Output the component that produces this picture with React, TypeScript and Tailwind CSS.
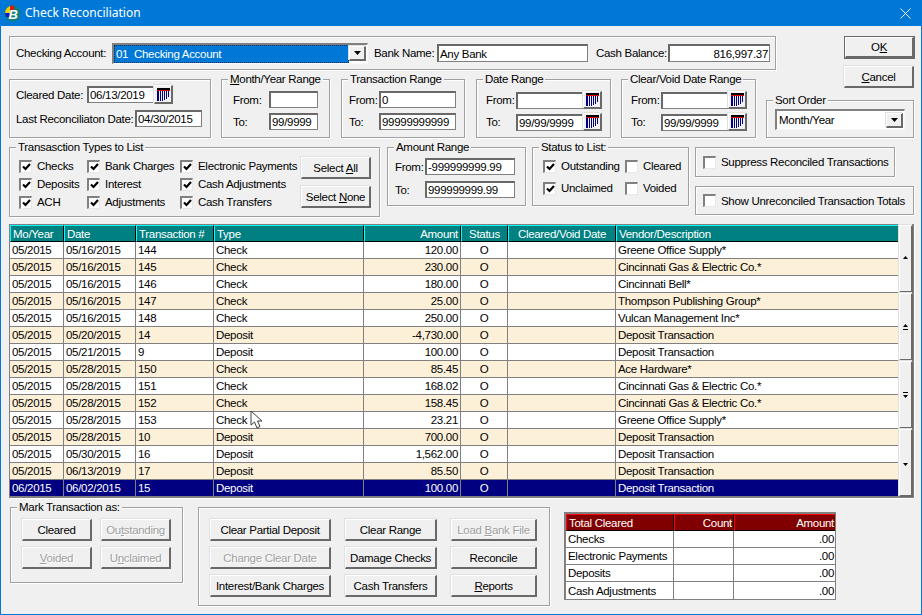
import React from 'react';

const SUNKEN = 'bg-white border-t-2 border-l-2 border-b border-r border-t-[#696969] border-l-[#696969] border-b-[#808080] border-r-[#808080]';
const RAISED = 'bg-[#f0f0f0] border-t border-l border-b-2 border-r-2 border-t-white border-l-white border-b-[#696969] border-r-[#696969] shadow-[-1px_-1px_0_#e0e0e0]';

const rows = [
  ['05/2015', '05/16/2015', '144', 'Check', '120.00', 'Greene Office Supply*'],
  ['05/2015', '05/16/2015', '145', 'Check', '230.00', 'Cincinnati Gas & Electric Co.*'],
  ['05/2015', '05/16/2015', '146', 'Check', '180.00', 'Cincinnati Bell*'],
  ['05/2015', '05/16/2015', '147', 'Check', '25.00', 'Thompson Publishing Group*'],
  ['05/2015', '05/16/2015', '148', 'Check', '250.00', 'Vulcan Management Inc*'],
  ['05/2015', '05/20/2015', '14', 'Deposit', '-4,730.00', 'Deposit Transaction'],
  ['05/2015', '05/21/2015', '9', 'Deposit', '100.00', 'Deposit Transaction'],
  ['05/2015', '05/28/2015', '150', 'Check', '85.45', 'Ace Hardware*'],
  ['05/2015', '05/28/2015', '151', 'Check', '168.02', 'Cincinnati Gas & Electric Co.*'],
  ['05/2015', '05/28/2015', '152', 'Check', '158.45', 'Cincinnati Gas & Electric Co.*'],
  ['05/2015', '05/28/2015', '153', 'Check', '23.21', 'Greene Office Supply*'],
  ['05/2015', '05/28/2015', '10', 'Deposit', '700.00', 'Deposit Transaction'],
  ['05/2015', '05/30/2015', '16', 'Deposit', '1,562.00', 'Deposit Transaction'],
  ['05/2015', '06/13/2019', '17', 'Deposit', '85.50', 'Deposit Transaction'],
  ['06/2015', '06/02/2015', '15', 'Deposit', '100.00', 'Deposit Transaction'],
];

const totals = ['Checks', 'Electronic Payments', 'Deposits', 'Cash Adjustments'];

const Group = ({ label, className, children }: { label?: React.ReactNode; className: string; children?: React.ReactNode }) => (
  <div className={`relative shrink-0 border border-[#a0a0a0] shadow-[inset_1px_1px_0_#fff,1px_1px_0_#fff] ${className}`}>
    {label && <span className="absolute -top-[8px] left-[6px] bg-[#f0f0f0] px-[2px]">{label}</span>}
    {children}
  </div>
);

const Input = ({ value, className, right }: { value?: string; className: string; right?: boolean }) => (
  <div className={`${SUNKEN} shrink-0 flex items-center px-[1px] overflow-hidden ${right ? 'justify-end' : ''} ${className}`}>{value}</div>
);

const Check = ({ checked, label, className }: { checked?: boolean; label: string; className?: string }) => (
  <div className={`flex items-center gap-[5px] ${className ?? ''}`}>
    <div className="w-[13px] h-[13px] shrink-0 bg-white border-t-2 border-l-2 border-b border-r border-t-[#808080] border-l-[#808080] border-b-[#e8e8e8] border-r-[#e8e8e8] flex items-center justify-center">
      {checked && (
        <svg width="9" height="8" viewBox="0 0 9 8">
          <path d="M1 3.5 L3.5 6 L8 1" fill="none" stroke="#000" strokeWidth="2.2" />
        </svg>
      )}
    </div>
    <span>{label}</span>
  </div>
);

const Btn = ({ children, disabled, className }: { children: React.ReactNode; disabled?: boolean; className: string }) => (
  <div className={`${RAISED} shrink-0 flex items-center justify-center ${disabled ? 'text-[#a0a0a0] [text-shadow:1px_1px_0_#fff]' : ''} ${className}`}>
    {children}
  </div>
);

const CalIcon = () => (
  <svg width="13" height="13" viewBox="0 0 13 13">
    <rect x="0" y="0" width="13" height="2" fill="#000" />
    <rect x="0" y="2" width="13" height="1" fill="#e00000" />
    {[10, 10, 10, 9, 8, 6].map((h, i) => (
      <rect key={i} x={i * 2 + 1} y="3" width="1" height={h} fill="#000080" />
    ))}
    <rect x="0" y="3" width="1" height="10" fill="#000080" />
  </svg>
);

const Cal = ({ className }: { className: string }) => (
  <Btn className={className}><CalIcon /></Btn>
);

const Drop = () => (
  <div className={`${RAISED} w-[17px] h-[15px] shrink-0 flex items-center justify-center`}>
    <svg width="7" height="4" viewBox="0 0 7 4"><path d="M0 0 H7 L3.5 4 Z" fill="#000" /></svg>
  </div>
);

const Combo = ({ value, selected, className }: { value: string; selected?: boolean; className: string }) => (
  <div className={`${className} shrink-0 flex items-center bg-white border-t-2 border-l-2 border-b border-r border-t-[#808080] border-l-[#808080] border-b-[#f8f8f8] border-r-[#f8f8f8] pr-[1px]`}>
    <div className={`flex-1 h-full flex items-center pl-[2px] whitespace-pre ${selected ? 'bg-[#0078d7] text-white outline-1 -outline-offset-1 outline-dotted outline-[#0a2a50]' : ''}`}>{value}</div>
    <Drop />
  </div>
);

const Arrow = ({ dir, double }: { dir: 'up' | 'down'; double?: boolean }) => (
  <svg width="7" height="8" viewBox="0 0 7 8">
    {dir === 'up' ? <path d="M3.5 1 L6 4 H1 Z" fill="#000" /> : <path d="M3.5 7 L6 4 H1 Z" fill="#000" />}
    {double && (dir === 'up' ? <rect x="1" y="6" width="5" height="1" fill="#000" /> : <rect x="1" y="1" width="5" height="1" fill="#000" />)}
  </svg>
);

const Head = ({ children, className }: { children: React.ReactNode; className?: string }) => (
  <th className={`h-[17px] p-0 px-[2px] font-normal text-white bg-[#008080] border-t border-l border-b border-r border-t-[#00ffff] border-l-[#00ffff] border-b-black border-r-black overflow-hidden ${className ?? 'text-left'}`}>{children}</th>
);

const App = () => {
  return (
    <div className="relative w-[922px] h-[615px] overflow-hidden bg-[#f0f0f0] text-black text-[11.5px] tracking-[-0.3px] leading-[14px] whitespace-nowrap font-['Liberation_Sans',Arial,sans-serif] border-x border-b border-[#0078d7]">
      <div className="h-[26px] -mx-[1px] bg-[#0078d7] flex items-center pl-[4px] pr-[11px] text-white text-[12px] tracking-normal font-['Noto_Sans',sans-serif]">
        <svg width="17" height="17" viewBox="0 0 17 17" className="shrink-0">
          <circle cx="8.5" cy="8.5" r="8" fill="#0e7f7a" />
          <path d="M1 8 A8 8 0 0 1 6 1 L6 8 Z" fill="#f2d000" />
          <path d="M6 1 A8 8 0 0 1 10 0.6 L10 5 L6 5 Z" fill="#d81818" />
          <path d="M1 8 H6 V12 H2 Z" fill="#1018c8" />
          <text x="4.5" y="13.5" fontSize="13" fontWeight="700" fontStyle="italic" fill="#fff" fontFamily="Liberation Sans, sans-serif">B</text>
        </svg>
        <span className="ml-[4px]">Check Reconciliation</span>
        <svg width="11" height="11" viewBox="0 0 11 11" className="ml-auto">
          <path d="M0.5 0.5 L10.5 10.5 M10.5 0.5 L0.5 10.5" stroke="#fff" strokeWidth="1" />
        </svg>
      </div>

      <div className="pl-[8px] pt-[10px]">
        <div className="flex">
          <div className="w-[747px] shrink-0">
            <Group className="w-[767px] h-[34px] flex items-center pl-[6px]">
              <span className="w-[96px] shrink-0">Checking Account:</span>
              <Combo value="01  Checking Account" selected className="w-[256px] h-[21px]" />
              <span className="w-[63px] ml-[6px] shrink-0">Bank Name:</span>
              <Input value="Any Bank" className="w-[151px] h-[18px]" />
              <span className="w-[72px] ml-[8px] shrink-0">Cash Balance:</span>
              <Input value="816,997.37" right className="w-[102px] h-[18px]" />
            </Group>
            <div className="flex mt-[9px]">
              <Group className="w-[202px] h-[59px] pl-[6px] pt-[5px]">
                <div className="flex items-center h-[19px]">
                  <span className="w-[71px]">Cleared Date:</span>
                  <Input value="06/13/2019" className="w-[67px] h-[17px]" />
                  <Cal className="w-[19px] h-[19px]" />
                </div>
                <div className="flex items-center h-[17px] mt-[6px]">
                  <span className="w-[119px]">Last Reconciliaton Date:</span>
                  <Input value="04/30/2015" className="w-[67px] h-[17px]" />
                </div>
              </Group>
              <Group label={<><u>M</u>onth/Year Range</>} className="w-[109px] h-[59px] ml-[10px] pl-[11px] pt-[11px]">
                <div className="flex items-center">
                  <span className="w-[36px]">From:</span>
                  <Input className="w-[49px] h-[17px]" />
                </div>
                <div className="flex items-center mt-[5px]">
                  <span className="w-[36px]">To:</span>
                  <Input value="99/9999" className="w-[49px] h-[17px]" />
                </div>
              </Group>
              <Group label="Transaction Range" className="w-[124px] h-[59px] ml-[11px] pl-[7px] pt-[11px]">
                <div className="flex items-center">
                  <span className="w-[30px]">From:</span>
                  <Input value="0" className="w-[77px] h-[17px]" />
                </div>
                <div className="flex items-center mt-[5px]">
                  <span className="w-[30px]">To:</span>
                  <Input value="99999999999" className="w-[77px] h-[17px]" />
                </div>
              </Group>
              <Group label="Date Range" className="w-[135px] h-[59px] ml-[11px] pl-[9px] pt-[11px]">
                <div className="flex items-center">
                  <span className="w-[30px]">From:</span>
                  <Input className="w-[67px] h-[17px]" />
                  <Cal className="w-[19px] h-[18px]" />
                </div>
                <div className="flex items-center mt-[4px]">
                  <span className="w-[30px]">To:</span>
                  <Input value="99/99/9999" className="w-[67px] h-[17px]" />
                  <Cal className="w-[19px] h-[18px]" />
                </div>
              </Group>
              <Group label="Clear/Void Date Range" className="w-[135px] h-[59px] ml-[10px] pl-[9px] pt-[11px]">
                <div className="flex items-center">
                  <span className="w-[30px]">From:</span>
                  <Input className="w-[67px] h-[17px]" />
                  <Cal className="w-[19px] h-[18px]" />
                </div>
                <div className="flex items-center mt-[4px]">
                  <span className="w-[30px]">To:</span>
                  <Input value="99/99/9999" className="w-[67px] h-[17px]" />
                  <Cal className="w-[19px] h-[18px]" />
                </div>
              </Group>
            </div>
          </div>
          <div className="ml-[10px] w-[148px] flex flex-col items-end">
            <div className="mt-[1px] outline-1 outline-[#696969]">
              <Btn className="w-[69px] h-[21px]"><span>O<u>K</u></span></Btn>
            </div>
            <Btn className="w-[70px] h-[22px] mt-[8px]"><span><u>C</u>ancel</span></Btn>
            <Group label="Sort Order" className="w-[148px] h-[38px] mt-auto pl-[8px] pt-[8px]">
              <Combo value="Month/Year" className="w-[130px] h-[21px]" />
            </Group>
          </div>
        </div>

        <div className="flex mt-[9px] items-start">
          <Group label="Transasction Types to List" className="w-[371px] h-[70px] pl-[9px] flex">
            <div className="grid grid-cols-[68px_93px_121px] auto-rows-[18px] mt-[9px] shrink-0">
              <Check checked label="Checks" />
              <Check checked label="Bank Charges" />
              <Check checked label="Electronic Payments" />
              <Check checked label="Deposits" />
              <Check checked label="Interest" />
              <Check checked label="Cash Adjustments" />
              <Check checked label="ACH" />
              <Check checked label="Adjustments" />
              <Check checked label="Cash Transfers" />
            </div>
            <div className="flex flex-col gap-[7px] mt-[9px]">
              <Btn className="w-[70px] h-[22px]"><span>Select <u>A</u>ll</span></Btn>
              <Btn className="w-[70px] h-[22px]"><span>Select <u>N</u>one</span></Btn>
            </div>
          </Group>
          <Group label="Amount Range" className="w-[139px] h-[59px] ml-[7px] pl-[7px] pt-[10px]">
            <div className="flex items-center">
              <span className="w-[30px]">From:</span>
              <Input value="-999999999.99" className="w-[90px] h-[17px]" />
            </div>
            <div className="flex items-center mt-[6px]">
              <span className="w-[30px]">To:</span>
              <Input value="999999999.99" className="w-[90px] h-[17px]" />
            </div>
          </Group>
          <Group label="Status to List:" className="w-[157px] h-[59px] ml-[6px] pl-[10px] pt-[12px]">
            <div className="grid grid-cols-[82px_1fr] auto-rows-[12px] gap-y-[10px]">
              <Check checked label="Outstanding" />
              <Check label="Cleared" />
              <Check checked label="Unclaimed" />
              <Check label="Voided" />
            </div>
          </Group>
          <div className="ml-[6px] flex flex-col gap-[9px]">
            <Group className="w-[200px] h-[30px] pl-[7px] flex items-center">
              <Check label="Suppress Reconciled Transactions" />
            </Group>
            <Group className="w-[219px] h-[29px] pl-[7px] flex items-center">
              <Check label="Show Unreconciled Transaction Totals" />
            </Group>
          </div>
        </div>

        <div className="flex w-[905px] mt-[7px] border border-[#808080] shadow-[1px_1px_0_#fff]">
          <table className="table-fixed border-separate border-spacing-0 w-[889px] shrink-0">
            <colgroup>
              <col className="w-[54px]" />
              <col className="w-[72px]" />
              <col className="w-[78px]" />
              <col className="w-[150px]" />
              <col className="w-[97px]" />
              <col className="w-[47px]" />
              <col className="w-[108px]" />
              <col className="w-[283px]" />
            </colgroup>
            <thead>
              <tr>
                <Head>Mo/Year</Head>
                <Head>Date</Head>
                <Head>Transaction #</Head>
                <Head>Type</Head>
                <Head className="text-right">Amount</Head>
                <Head className="text-center">Status</Head>
                <Head className="text-center">Cleared/Void Date</Head>
                <Head>Vendor/Description</Head>
              </tr>
            </thead>
            <tbody>
              {rows.map((r, i) => {
                const selected = i === rows.length - 1;
                const rowClass = selected ? 'bg-[#000080] text-white' : i % 2 === 1 ? 'bg-[#fdf0d8]' : 'bg-white';
                const cell = 'h-[17px] p-0 px-[2px] border-b border-r border-[#808080] overflow-hidden';
                return (
                  <tr key={i} className={rowClass}>
                    <td className={cell}>{r[0]}</td>
                    <td className={cell}>{r[1]}</td>
                    <td className={cell}>{r[2]}</td>
                    <td className={cell}>{r[3]}</td>
                    <td className={`${cell} text-right`}>{r[4]}</td>
                    <td className={`${cell} text-center`}>O</td>
                    <td className={cell}></td>
                    <td className={cell}>{r[5]}</td>
                  </tr>
                );
              })}
            </tbody>
          </table>
          <div className="flex flex-col w-[14px]">
            <Btn className="w-[14px] h-[68px]"><Arrow dir="up" /></Btn>
            <Btn className="w-[14px] h-[68px]"><Arrow dir="up" double /></Btn>
            <Btn className="w-[14px] h-[68px]"><Arrow dir="down" double /></Btn>
            <Btn className="w-[14px] h-[68px]"><Arrow dir="down" /></Btn>
          </div>
        </div>

        <div className="flex items-start mt-[9px]">
          <Group label="Mark Transaction as:" className="w-[173px] h-[76px] ml-[1px] pl-[11px] pt-[11px]">
            <div className="grid grid-cols-[70px_70px] auto-rows-[22px] gap-x-[9px] gap-y-[6px]">
              <Btn className="h-[22px]">Cleared</Btn>
              <Btn disabled className="h-[22px]"><span>Ou<u>t</u>standing</span></Btn>
              <Btn disabled className="h-[22px]"><span><u>V</u>oided</span></Btn>
              <Btn disabled className="h-[22px]"><span>U<u>n</u>claimed</span></Btn>
            </div>
          </Group>
          <Group className="w-[352px] h-[99px] ml-[15px] pl-[11px] pt-[11px]">
            <div className="grid grid-cols-[121px_92px_86px] auto-rows-[22px] gap-x-[14px] gap-y-[6px]">
              <Btn className="h-[22px]">Clear Partial Deposit</Btn>
              <Btn className="h-[22px]">Clear Range</Btn>
              <Btn disabled className="h-[22px]"><span>Load <u>B</u>ank File</span></Btn>
              <Btn disabled className="h-[22px]">Change Clear Date</Btn>
              <Btn className="h-[22px]">Damage Checks</Btn>
              <Btn className="h-[22px]">Reconcile</Btn>
              <Btn className="h-[22px]">Interest/Bank Charges</Btn>
              <Btn className="h-[22px]">Cash Transfers</Btn>
              <Btn className="h-[22px]"><span><u>R</u>eports</span></Btn>
            </div>
          </Group>
          <div className="ml-[14px] mt-[5px] w-[272px] border-t-2 border-l-2 border-b border-r border-[#808080] shrink-0">
            <table className="table-fixed border-separate border-spacing-0 w-[269px]">
              <colgroup>
                <col className="w-[108px]" />
                <col className="w-[60px]" />
                <col className="w-[101px]" />
              </colgroup>
              <thead>
                <tr>
                  <th className="h-[17px] p-0 pl-[2px] font-normal text-left text-white bg-[#800000] border-t border-l border-b border-r border-t-[#ff0000] border-l-[#ff0000] border-b-black border-r-black">Total Cleared</th>
                  <th className="h-[17px] p-0 pr-[1px] font-normal text-right text-white bg-[#800000] border-t border-l border-b border-r border-t-[#ff0000] border-l-[#ff0000] border-b-black border-r-black">Count</th>
                  <th className="h-[17px] p-0 pr-[1px] font-normal text-right text-white bg-[#800000] border-t border-l border-b border-t-[#ff0000] border-l-[#ff0000] border-b-black">Amount</th>
                </tr>
              </thead>
              <tbody>
                {totals.map((t, i) => (
                  <tr key={t} className="bg-white">
                    <td className={`h-[17px] p-0 pl-[2px] border-r border-[#808080] ${i < totals.length - 1 ? 'border-b' : ''}`}>{t}</td>
                    <td className={`h-[17px] p-0 border-r border-[#808080] ${i < totals.length - 1 ? 'border-b' : ''}`}></td>
                    <td className={`h-[17px] p-0 pr-[1px] text-right border-[#808080] ${i < totals.length - 1 ? 'border-b' : ''}`}>.00</td>
                  </tr>
                ))}
              </tbody>
            </table>
          </div>
        </div>
      </div>

      {/* mouse pointer sitting over the grid */}
      <svg width="14" height="20" viewBox="0 0 14 20" className="absolute left-[249px] top-[410px] pointer-events-none">
        <path d="M1 1 V15 L4.5 12 L7 18 L10 16.5 L7.5 11 H12 Z" fill="#fff" stroke="#404040" strokeWidth="1" />
      </svg>
    </div>
  );
};

export default App;
